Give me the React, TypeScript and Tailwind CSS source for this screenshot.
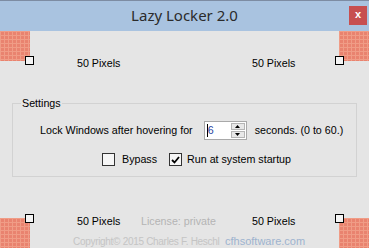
import React from "react";

function RedGrid({ className }: { className: string }) {
  return (
    <svg className={className} width="30" height="30" viewBox="0 0 30 30">
      <defs>
        <pattern id="g" width="4" height="4" patternUnits="userSpaceOnUse">
          <rect width="4" height="4" fill="#e9836f" />
          <rect width="4" height="1" fill="#f09c86" />
          <rect width="1" height="4" fill="#f09c86" />
        </pattern>
      </defs>
      <rect width="30" height="30" fill="url(#g)" />
    </svg>
  );
}

function Handle({ className }: { className: string }) {
  return <div className={"absolute w-[9px] h-[9px] bg-[#f4f4f4] border border-black " + className} />;
}

export default function App() {
  const sans = { fontFamily: '"Liberation Sans", Arial, sans-serif' };
  return (
    <div className="relative w-[369px] h-[248px] overflow-hidden bg-[#e5e5e5] flex flex-col text-[10.7px] text-black whitespace-nowrap" style={sans}>
      {/* title bar */}
      <div className="h-[31px] shrink-0 bg-[#a9c3e0] border-t border-[#7d8ca3] relative flex items-center justify-center">
        <span className="text-[15px] text-[#2b2b2b] mt-[-2px]" style={{ fontFamily: '"Noto Sans", "Open Sans", sans-serif' }}>
          Lazy Locker 2.0
        </span>
        <div className="absolute right-[2px] top-[5px] w-[18px] h-[19px] bg-[#c74f50] flex items-center justify-center">
          <span className="text-white text-[11px] font-bold leading-none mt-[-2px]">x</span>
        </div>
      </div>

      {/* corner markers */}
      <RedGrid className="absolute left-0 top-[31px]" />
      <RedGrid className="absolute right-0 top-[31px]" />
      <RedGrid className="absolute left-0 top-[218px]" />
      <RedGrid className="absolute right-0 top-[218px]" />
      <Handle className="left-[25px] top-[56px]" />
      <Handle className="left-[335px] top-[56px]" />
      <Handle className="left-[25px] top-[214px]" />
      <Handle className="left-[335px] top-[214px]" />

      {/* top labels */}
      <div className="flex mt-[26px] leading-[13px]">
        <span className="ml-[77px] w-[175px] shrink-0">50 Pixels</span>
        <span>50 Pixels</span>
      </div>

      {/* settings group */}
      <fieldset className="mx-[12px] mt-[27px] h-[80px] shrink-0 border border-[#d2d2d2] px-0 pb-0">
        <legend className="ml-[8px] px-[1px] leading-[13px]">Settings</legend>
        <div className="flex items-center mt-[11px] h-[19px]">
          <span className="ml-[27px]">Lock Windows after hovering for</span>
          <div className="ml-[11px] w-[43px] h-[19px] border border-[#a9a9a9] bg-white flex items-center">
            <span className="ml-[2px] w-[1px] h-[13px] bg-black" />
            <span className="text-[#1f3fa0]">6</span>
            <div className="ml-auto mr-[1px] flex flex-col gap-[1px]">
              <div className="w-[14px] h-[7px] bg-[#e8e8e8] border border-[#b5b5b5] flex items-center justify-center">
                <svg width="5" height="3" viewBox="0 0 5 3"><path d="M2.5 0 L5 3 L0 3 Z" fill="#000" /></svg>
              </div>
              <div className="w-[14px] h-[7px] bg-[#e8e8e8] border border-[#b5b5b5] flex items-center justify-center">
                <svg width="5" height="3" viewBox="0 0 5 3"><path d="M0 0 L5 0 L2.5 3 Z" fill="#000" /></svg>
              </div>
            </div>
          </div>
          <span className="ml-[8px]">seconds. (0 to 60.)</span>
        </div>
        <div className="flex items-center mt-[13px] h-[13px]">
          <div className="ml-[89px] w-[13px] h-[13px] border border-[#333] bg-[#f6f6f6]" />
          <span className="ml-[7px]">Bypass</span>
          <div className="ml-[12px] w-[13px] h-[13px] border border-[#333] bg-[#f6f6f6] flex items-center justify-center">
            <svg width="9" height="8" viewBox="0 0 9 8"><path d="M1 4 L3.5 6.5 L8 1" stroke="#000" strokeWidth="1.8" fill="none" /></svg>
          </div>
          <span className="ml-[5px]">Run at system startup</span>
        </div>
      </fieldset>

      {/* bottom labels */}
      <div className="flex mt-[38px] leading-[13px]">
        <span className="ml-[77px] w-[64px] shrink-0">50 Pixels</span>
        <span className="w-[111px] shrink-0 text-[#b4b4b4]">License: private</span>
        <span>50 Pixels</span>
      </div>
      <div className="flex mt-[7px] leading-[13px] items-baseline">
        <span className="ml-[73px] w-[152px] shrink-0 text-[#c4c4c4] text-[10px] tracking-[-0.3px]">Copyright© 2015 Charles F. Heschl</span>
        <span className="text-[#9db3cf] text-[11px]">cfhsoftware.com</span>
      </div>
    </div>
  );
}
